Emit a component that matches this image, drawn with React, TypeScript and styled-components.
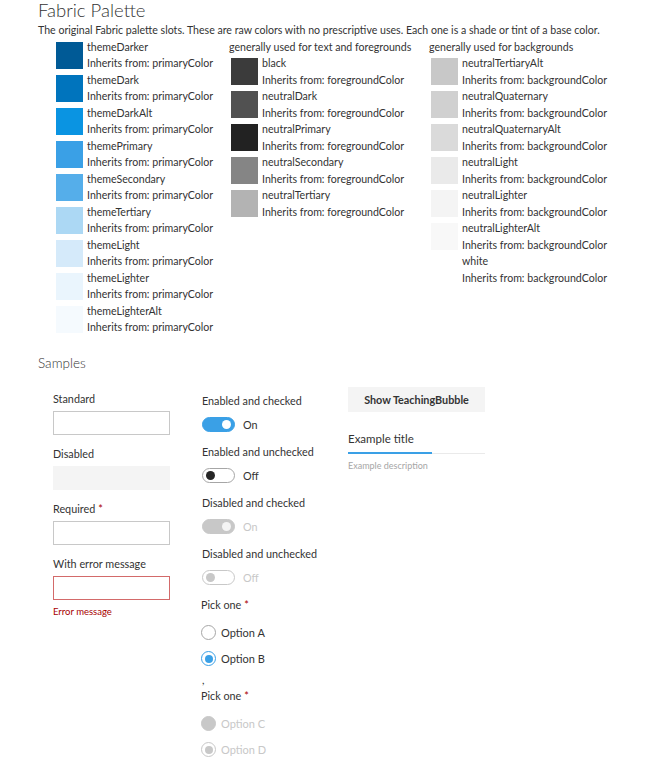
import React from "react";
import styled, { createGlobalStyle } from "styled-components";

const GlobalStyle = createGlobalStyle`
  body {
    margin: 0;
    background: #ffffff;
    font-family: Lato, "Open Sans", sans-serif;
    color: #333333;
  }
`;

const Page = styled.div`
  padding-left: 38px;
`;

const Title = styled.h1`
  margin: 0;
  font-size: 18.5px;
  font-weight: 300;
  line-height: 20px;
  color: #333333;
`;

const Description = styled.p`
  margin: 2px 0 0;
  font-size: 10.6px;
  line-height: 16.5px;
`;

const PaletteGrid = styled.div`
  display: grid;
  grid-template-columns: 175px 200px 1fr;
  margin-left: 16px;
`;

const PaletteColumn = styled.div`
  display: flex;
  flex-direction: column;
`;

const ColumnHeader = styled.div`
  font-size: 10.6px;
  line-height: 16.5px;
`;

const SwatchRow = styled.div`
  display: flex;
  align-items: center;
  height: 33px;
  padding-left: 2px;
`;

const Swatch = styled.div<{ $color: string }>`
  width: 27px;
  height: 27px;
  flex-shrink: 0;
  background: ${({ $color }) => $color};
`;

const SwatchText = styled.div`
  margin-left: 4px;
  font-size: 10.6px;
  line-height: 16.5px;
  white-space: nowrap;
`;

const SectionTitle = styled.h2`
  margin: 18px 0 0;
  font-size: 13.5px;
  font-weight: 300;
  line-height: 18px;
  color: #333333;
`;

const SamplesGrid = styled.div`
  display: grid;
  grid-template-columns: 149px 146px 1fr;
  margin: 15px 0 0 15px;
  align-items: start;
`;

const FieldColumn = styled.div`
  padding-top: 4px;
  display: flex;
  flex-direction: column;
`;

const Field = styled.div`
  margin-bottom: 11px;
`;

const Label = styled.div`
  font-size: 10.8px;
  line-height: 16px;
  margin-bottom: 4px;
  white-space: nowrap;
`;

const Star = styled.span`
  color: #a80000;
  margin-left: 3px;
`;

const Input = styled.div<{ $state?: "error" | "disabled" }>`
  box-sizing: border-box;
  width: 117px;
  height: 24px;
  border: 1px solid
    ${({ $state }) =>
      $state === "error" ? "#d36a6a" : $state === "disabled" ? "#f4f4f4" : "#c8c8c8"};
  background: ${({ $state }) => ($state === "disabled" ? "#f4f4f4" : "#ffffff")};
`;

const ErrorText = styled.div`
  margin-top: 5px;
  font-size: 9.5px;
  line-height: 14px;
  color: #a80000;
`;

const ControlColumn = styled.div`
  padding-top: 6px;
  display: flex;
  flex-direction: column;
`;

const ToggleBlock = styled.div`
  display: flex;
  flex-direction: column;
  margin-bottom: 9px;
`;

const ToggleLabel = styled(Label)`
  margin-bottom: 6px;
`;

const ToggleRow = styled.div`
  display: flex;
  align-items: center;
  height: 20px;
`;

const Track = styled.div<{ $on: boolean; $disabled?: boolean }>`
  box-sizing: border-box;
  width: 33px;
  height: 15px;
  border-radius: 8px;
  display: flex;
  align-items: center;
  padding: 0 3px;
  justify-content: ${({ $on }) => ($on ? "flex-end" : "flex-start")};
  background: ${({ $on, $disabled }) =>
    $on ? ($disabled ? "#c8c8c8" : "#3aa0e6") : "#ffffff"};
  border: 1px solid
    ${({ $on, $disabled }) =>
      $on ? ($disabled ? "#c8c8c8" : "#3aa0e6") : $disabled ? "#c8c8c8" : "#a6a6a6"};
`;

const Thumb = styled.div<{ $on: boolean; $disabled?: boolean }>`
  width: 9px;
  height: 9px;
  border-radius: 50%;
  background: ${({ $on, $disabled }) =>
    $on ? ($disabled ? "#f4f4f4" : "#ffffff") : $disabled ? "#c8c8c8" : "#262626"};
`;

const StateText = styled.span<{ $disabled?: boolean }>`
  margin-left: 8px;
  font-size: 10.8px;
  color: ${({ $disabled }) => ($disabled ? "#c8c8c8" : "#333333")};
`;

const ChoiceGroup = styled.div`
  margin-left: -1px;
`;

const ChoiceLabel = styled(Label)`
  margin-bottom: 10px;
`;

const OptionRow = styled.div`
  display: flex;
  align-items: center;
  height: 20px;
  margin-bottom: 6px;
`;

const Radio = styled.div<{ $checked?: boolean; $disabled?: boolean; $filled?: boolean }>`
  box-sizing: border-box;
  width: 15px;
  height: 15px;
  border-radius: 50%;
  display: flex;
  align-items: center;
  justify-content: center;
  border: 1px solid
    ${({ $checked, $disabled }) =>
      $disabled ? "#c8c8c8" : $checked ? "#3aa0e6" : "#a6a6a6"};
  background: ${({ $filled }) => ($filled ? "#c8c8c8" : "#ffffff")};

  &::after {
    content: "";
    display: ${({ $checked }) => ($checked ? "block" : "none")};
    width: 8px;
    height: 8px;
    border-radius: 50%;
    background: ${({ $disabled }) => ($disabled ? "#c8c8c8" : "#3aa0e6")};
  }
`;

const OptionText = styled.span<{ $disabled?: boolean }>`
  margin-left: 5px;
  font-size: 11px;
  color: ${({ $disabled }) => ($disabled ? "#c8c8c8" : "#333333")};
`;

const Separator = styled.div`
  font-size: 10.8px;
  line-height: 16px;
  margin-top: -3px;
`;

const BubbleColumn = styled.div`
  display: flex;
  flex-direction: column;
  width: 137px;
`;

const Button = styled.button`
  width: 137px;
  height: 25px;
  border: none;
  background: #f4f4f4;
  font-family: inherit;
  font-size: 10.8px;
  font-weight: 700;
  color: #333333;
  padding: 0;
`;

const PivotTitle = styled.div`
  margin-top: 19px;
  font-size: 11.5px;
  line-height: 16px;
`;

const PivotLine = styled.div`
  margin-top: 4px;
  height: 2px;
  display: flex;
  align-items: flex-end;
  border-bottom: 1px solid #eaeaea;
`;

const PivotActive = styled.div`
  width: 84px;
  height: 2px;
  background: #3aa0e6;
  margin-bottom: -1px;
`;

const PivotDescription = styled.div`
  margin-top: 5px;
  font-size: 9px;
  line-height: 13px;
  color: #a6a6a6;
`;

type Slot = { name: string; color: string; from: string };

const primary = (name: string, color: string): Slot => ({ name, color, from: "primaryColor" });
const fg = (name: string, color: string): Slot => ({ name, color, from: "foregroundColor" });
const bg = (name: string, color: string): Slot => ({ name, color, from: "backgroundColor" });

const columns: { header?: string; slots: Slot[] }[] = [
  {
    slots: [
      primary("themeDarker", "#005a96"),
      primary("themeDark", "#0074bd"),
      primary("themeDarkAlt", "#0a94e2"),
      primary("themePrimary", "#3aa0e6"),
      primary("themeSecondary", "#55aeea"),
      primary("themeTertiary", "#acd8f4"),
      primary("themeLight", "#d5eafa"),
      primary("themeLighter", "#eaf5fd"),
      primary("themeLighterAlt", "#f5fafe"),
    ],
  },
  {
    header: "generally used for text and foregrounds",
    slots: [
      fg("black", "#3b3b3b"),
      fg("neutralDark", "#515151"),
      fg("neutralPrimary", "#222222"),
      fg("neutralSecondary", "#858585"),
      fg("neutralTertiary", "#b3b3b3"),
    ],
  },
  {
    header: "generally used for backgrounds",
    slots: [
      bg("neutralTertiaryAlt", "#c8c8c8"),
      bg("neutralQuaternary", "#d0d0d0"),
      bg("neutralQuaternaryAlt", "#dadada"),
      bg("neutralLight", "#eaeaea"),
      bg("neutralLighter", "#f4f4f4"),
      bg("neutralLighterAlt", "#f8f8f8"),
      bg("white", "#ffffff"),
    ],
  },
];

const toggles = [
  { label: "Enabled and checked", on: true, disabled: false },
  { label: "Enabled and unchecked", on: false, disabled: false },
  { label: "Disabled and checked", on: true, disabled: true },
  { label: "Disabled and unchecked", on: false, disabled: true },
];

export default function App(): JSX.Element {
  return (
    <Page>
      <GlobalStyle />
      <Title>Fabric Palette</Title>
      <Description>
        The original Fabric palette slots. These are raw colors with no prescriptive uses. Each one
        is a shade or tint of a base color.
      </Description>
      <PaletteGrid>
        {columns.map((col, i) => (
          <PaletteColumn key={i}>
            {col.header && <ColumnHeader>{col.header}</ColumnHeader>}
            {col.slots.map((s) => (
              <SwatchRow key={s.name}>
                <Swatch $color={s.color} />
                <SwatchText>
                  <div>{s.name}</div>
                  <div>Inherits from: {s.from}</div>
                </SwatchText>
              </SwatchRow>
            ))}
          </PaletteColumn>
        ))}
      </PaletteGrid>

      <SectionTitle>Samples</SectionTitle>
      <SamplesGrid>
        <FieldColumn>
          <Field>
            <Label>Standard</Label>
            <Input />
          </Field>
          <Field>
            <Label>Disabled</Label>
            <Input $state="disabled" />
          </Field>
          <Field>
            <Label>
              Required<Star>*</Star>
            </Label>
            <Input />
          </Field>
          <Field>
            <Label>With error message</Label>
            <Input $state="error" />
            <ErrorText>Error message</ErrorText>
          </Field>
        </FieldColumn>

        <ControlColumn>
          {toggles.map((t) => (
            <ToggleBlock key={t.label}>
              <ToggleLabel>{t.label}</ToggleLabel>
              <ToggleRow>
                <Track $on={t.on} $disabled={t.disabled}>
                  <Thumb $on={t.on} $disabled={t.disabled} />
                </Track>
                <StateText $disabled={t.disabled}>{t.on ? "On" : "Off"}</StateText>
              </ToggleRow>
            </ToggleBlock>
          ))}
          <ChoiceGroup>
            <ChoiceLabel>
              Pick one<Star>*</Star>
            </ChoiceLabel>
            <OptionRow>
              <Radio />
              <OptionText>Option A</OptionText>
            </OptionRow>
            <OptionRow>
              <Radio $checked />
              <OptionText>Option B</OptionText>
            </OptionRow>
          </ChoiceGroup>
          <Separator>,</Separator>
          <ChoiceGroup>
            <ChoiceLabel>
              Pick one<Star>*</Star>
            </ChoiceLabel>
            <OptionRow>
              <Radio $disabled $filled />
              <OptionText $disabled>Option C</OptionText>
            </OptionRow>
            <OptionRow>
              <Radio $disabled $checked />
              <OptionText $disabled>Option D</OptionText>
            </OptionRow>
          </ChoiceGroup>
        </ControlColumn>

        <BubbleColumn>
          <Button>Show TeachingBubble</Button>
          <PivotTitle>Example title</PivotTitle>
          <PivotLine>
            <PivotActive />
          </PivotLine>
          <PivotDescription>Example description</PivotDescription>
        </BubbleColumn>
      </SamplesGrid>
    </Page>
  );
}
